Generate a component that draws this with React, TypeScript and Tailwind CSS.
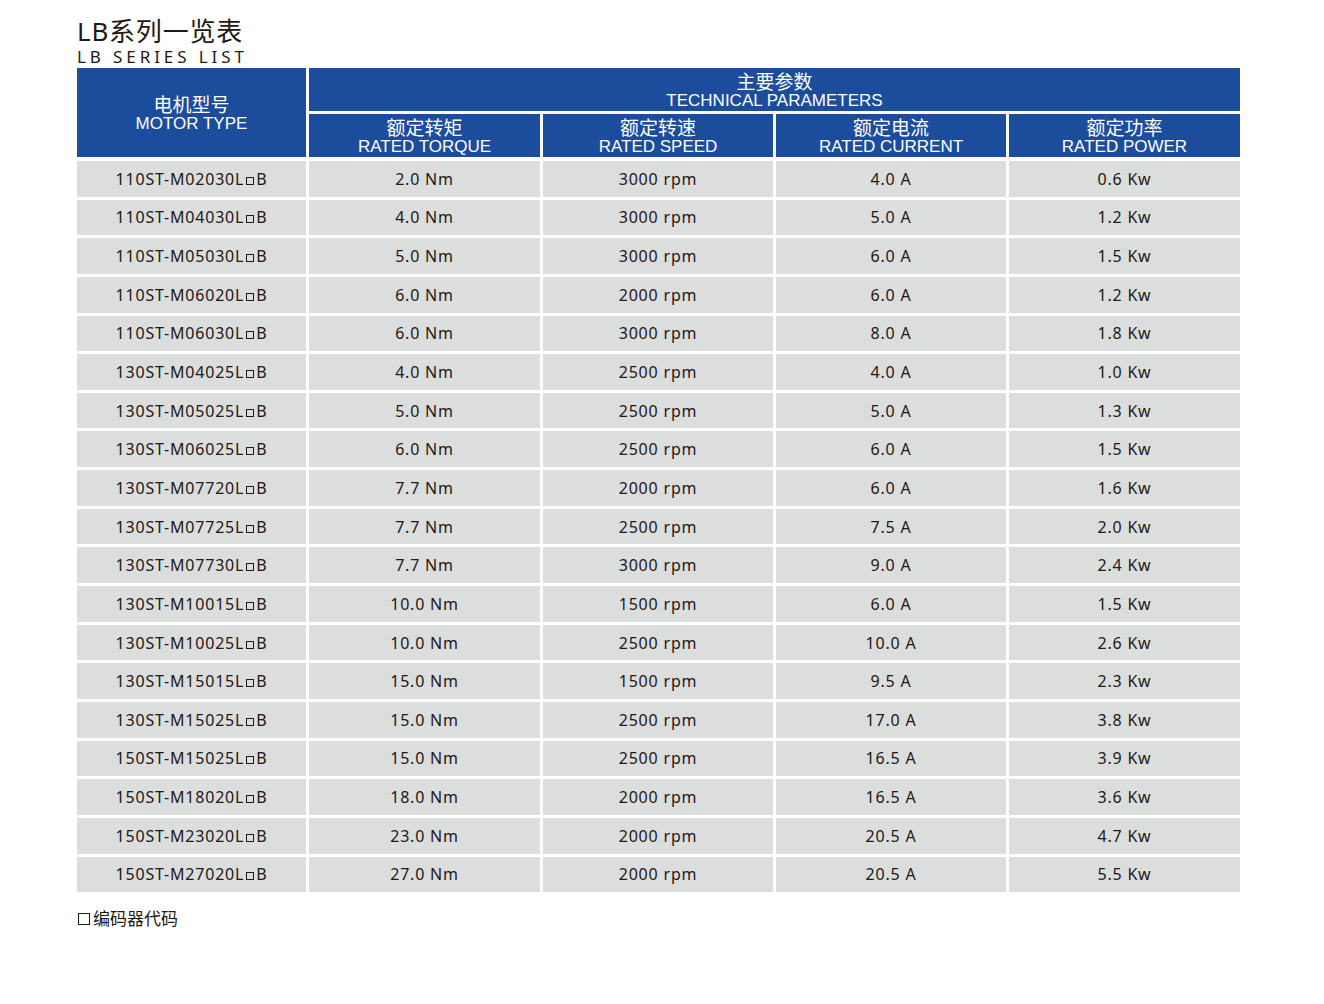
import React from 'react';

const rows: [string, string, string, string, string][] = [
  ['110ST-M02030L', '2.0 Nm', '3000 rpm', '4.0 A', '0.6 Kw'],
  ['110ST-M04030L', '4.0 Nm', '3000 rpm', '5.0 A', '1.2 Kw'],
  ['110ST-M05030L', '5.0 Nm', '3000 rpm', '6.0 A', '1.5 Kw'],
  ['110ST-M06020L', '6.0 Nm', '2000 rpm', '6.0 A', '1.2 Kw'],
  ['110ST-M06030L', '6.0 Nm', '3000 rpm', '8.0 A', '1.8 Kw'],
  ['130ST-M04025L', '4.0 Nm', '2500 rpm', '4.0 A', '1.0 Kw'],
  ['130ST-M05025L', '5.0 Nm', '2500 rpm', '5.0 A', '1.3 Kw'],
  ['130ST-M06025L', '6.0 Nm', '2500 rpm', '6.0 A', '1.5 Kw'],
  ['130ST-M07720L', '7.7 Nm', '2000 rpm', '6.0 A', '1.6 Kw'],
  ['130ST-M07725L', '7.7 Nm', '2500 rpm', '7.5 A', '2.0 Kw'],
  ['130ST-M07730L', '7.7 Nm', '3000 rpm', '9.0 A', '2.4 Kw'],
  ['130ST-M10015L', '10.0 Nm', '1500 rpm', '6.0 A', '1.5 Kw'],
  ['130ST-M10025L', '10.0 Nm', '2500 rpm', '10.0 A', '2.6 Kw'],
  ['130ST-M15015L', '15.0 Nm', '1500 rpm', '9.5 A', '2.3 Kw'],
  ['130ST-M15025L', '15.0 Nm', '2500 rpm', '17.0 A', '3.8 Kw'],
  ['150ST-M15025L', '15.0 Nm', '2500 rpm', '16.5 A', '3.9 Kw'],
  ['150ST-M18020L', '18.0 Nm', '2000 rpm', '16.5 A', '3.6 Kw'],
  ['150ST-M23020L', '23.0 Nm', '2000 rpm', '20.5 A', '4.7 Kw'],
  ['150ST-M27020L', '27.0 Nm', '2000 rpm', '20.5 A', '5.5 Kw'],
];

const subHeads = [
  ['额定转矩', 'RATED TORQUE'],
  ['额定转速', 'RATED SPEED'],
  ['额定电流', 'RATED CURRENT'],
  ['额定功率', 'RATED POWER'],
];

const cjk = "font-['Noto_Sans','Noto_Sans_CJK_SC',sans-serif]";
const latin = "font-['Liberation_Sans',Arial,sans-serif]";

export default function App() {
  return (
    <div className="min-h-screen bg-white pl-[77px] pt-[14px] text-[#231815]">
      {/* Title */}
      <div className={`${cjk} text-[26px] leading-[34px] tracking-[0.03em]`}>LB系列一览表</div>
      <div className={`${cjk} text-[17px] leading-[18px] tracking-[0.23em]`}>LB SERIES LIST</div>

      <div className="mt-[2px] w-[1163px]">
        {/* Header */}
        <div className="grid grid-cols-[229px_231px_230px_230px_231px] grid-rows-[43px_43px] gap-[3px] text-white">
          <div className="row-span-2 flex flex-col items-center justify-center bg-[#1c4d9c] pt-[3px]">
            <span className={`${cjk} text-[19px] leading-[20px]`}>电机型号</span>
            <span className={`${latin} text-[17px] leading-[18px]`}>MOTOR TYPE</span>
          </div>
          <div className="col-span-4 flex flex-col items-center justify-end bg-[#1c4d9c] pb-[1px]">
            <span className={`${cjk} text-[19px] leading-[20px]`}>主要参数</span>
            <span className={`${latin} text-[17px] leading-[18px]`}>TECHNICAL PARAMETERS</span>
          </div>
          {subHeads.map(([zh, en]) => (
            <div key={en} className="flex flex-col items-center justify-end bg-[#1c4d9c] pb-[1px]">
              <span className={`${cjk} text-[19px] leading-[20px]`}>{zh}</span>
              <span className={`${latin} text-[17px] leading-[18px]`}>{en}</span>
            </div>
          ))}
        </div>

        {/* Body */}
        <div className="mt-[4px] flex flex-col gap-[3px]">
          {rows.map((r) => (
            <div
              key={r[0]}
              className={`grid grid-cols-[229px_231px_230px_230px_231px] gap-[3px] ${cjk} text-[16px] tracking-[0.05em]`}
            >
              <div className="flex h-[35.65px] items-center justify-center bg-[#dcdddd]">
                {r[0]}
                <span className="mx-[2px] inline-block h-[8px] w-[8px] translate-y-[2px] border border-[#231815]" />
                B
              </div>
              {r.slice(1).map((v, i) => (
                <div key={i} className="flex h-[35.65px] items-center justify-center bg-[#dcdddd]">
                  {v}
                </div>
              ))}
            </div>
          ))}
        </div>
      </div>

      {/* Footnote */}
      <div className={`${cjk} mt-[16px] flex items-center text-[17px] leading-[22px]`}>
        <span className="ml-[1px] mr-[3px] inline-block h-[12px] w-[12px] border border-[#231815]" />
        编码器代码
      </div>
    </div>
  );
}
